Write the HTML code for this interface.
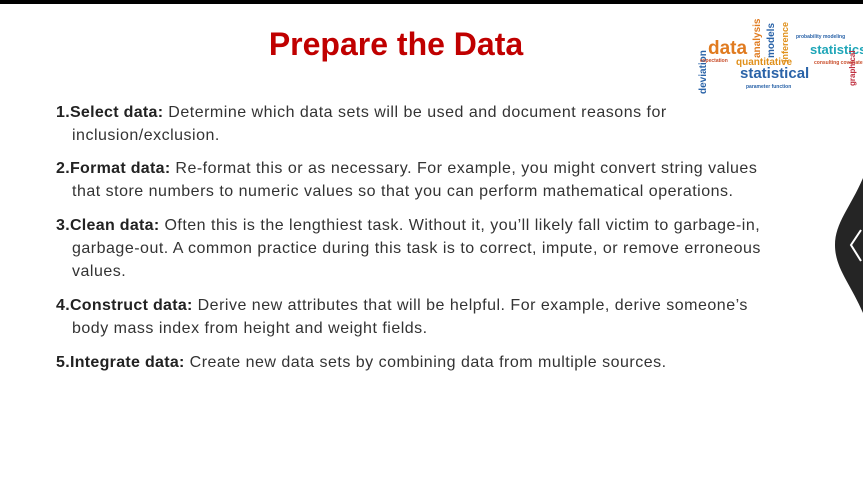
<!DOCTYPE html>
<html><head><meta charset="utf-8"><style>
html,body{margin:0;padding:0;width:863px;height:494px;overflow:hidden;background:#fff;font-family:"Liberation Sans",sans-serif;color:#333;}
.bar{position:absolute;left:0;top:0;width:863px;height:4px;background:#000;}
h1{position:absolute;left:0;width:792px;top:26px;margin:0;text-align:center;color:#c00000;font-size:32px;font-weight:bold;}
.l{position:absolute;white-space:nowrap;font-size:16px;letter-spacing:0.5px;}
b{font-weight:bold;color:#222;letter-spacing:0.3px}
.wc{position:absolute;left:696px;top:14px;width:167px;height:80px;font-family:"Liberation Sans",sans-serif;font-weight:bold;overflow:hidden;}
.wc span{position:absolute;white-space:nowrap;}
</style></head><body>
<div class="bar"></div>
<h1>Prepare the Data</h1>
<div class="wc">
<span style="left:12px;top:24px;font-size:19px;color:#e07b20">data</span>
<span style="left:40px;top:43px;font-size:10px;color:#e0901a">quantitative</span>
<span style="left:44px;top:51px;font-size:15px;color:#2a63a8">statistical</span>
<span style="left:114px;top:28px;font-size:13px;color:#1fa6b8">statistics</span>
<span style="left:2px;top:80px;font-size:10px;color:#2a63a8;transform:rotate(-90deg);transform-origin:left top">deviation</span>
<span style="left:56px;top:44px;font-size:10px;color:#e07b20;transform:rotate(-90deg);transform-origin:left top">analysis</span>
<span style="left:70px;top:44px;font-size:10px;color:#2a63a8;transform:rotate(-90deg);transform-origin:left top">models</span>
<span style="left:84px;top:48px;font-size:9px;color:#e0901a;transform:rotate(-90deg);transform-origin:left top">inference</span>
<span style="left:100px;top:20px;font-size:5px;color:#2a63a8">probability modeling</span>
<span style="left:4px;top:44px;font-size:5px;color:#c94d2a">expectation</span>
<span style="left:50px;top:70px;font-size:5px;color:#2a63a8">parameter function</span>
<span style="left:118px;top:46px;font-size:5px;color:#c94d2a">consulting covariate</span>
<span style="left:152px;top:72px;font-size:8px;color:#c03040;transform:rotate(-90deg);transform-origin:left top">graphical</span>
</div>
<div class="l" style="left:56px;top:104px"><b>1.Select data:</b> Determine which data sets will be used and document reasons for</div>
<div class="l" style="left:72px;top:127px">inclusion/exclusion.</div>
<div class="l" style="left:56px;top:160px"><b>2.Format data:</b> Re-format this or as necessary. For example, you might convert string values</div>
<div class="l" style="left:72px;top:183px">that store numbers to numeric values so that you can perform mathematical operations.</div>
<div class="l" style="left:56px;top:217px"><b>3.Clean data:</b> Often this is the lengthiest task. Without it, you’ll likely fall victim to garbage-in,</div>
<div class="l" style="left:72px;top:240px">garbage-out. A common practice during this task is to correct, impute, or remove erroneous</div>
<div class="l" style="left:72px;top:263px">values.</div>
<div class="l" style="left:56px;top:297px"><b>4.Construct data:</b> Derive new attributes that will be helpful. For example, derive someone’s</div>
<div class="l" style="left:72px;top:320px">body mass index from height and weight fields.</div>
<div class="l" style="left:56px;top:354px"><b>5.Integrate data:</b> Create new data sets by combining data from multiple sources.</div>
<svg style="position:absolute;left:830px;top:178px" width="33" height="135" viewBox="0 0 33 135">
<path d="M33 0 C20 30 5 45 5 67 C5 90 20 105 33 135 Z" fill="#252525"/>
<path d="M31 52 L21 67 L31 83" stroke="#fff" stroke-width="2" fill="none"/>
</svg>
</body></html>
